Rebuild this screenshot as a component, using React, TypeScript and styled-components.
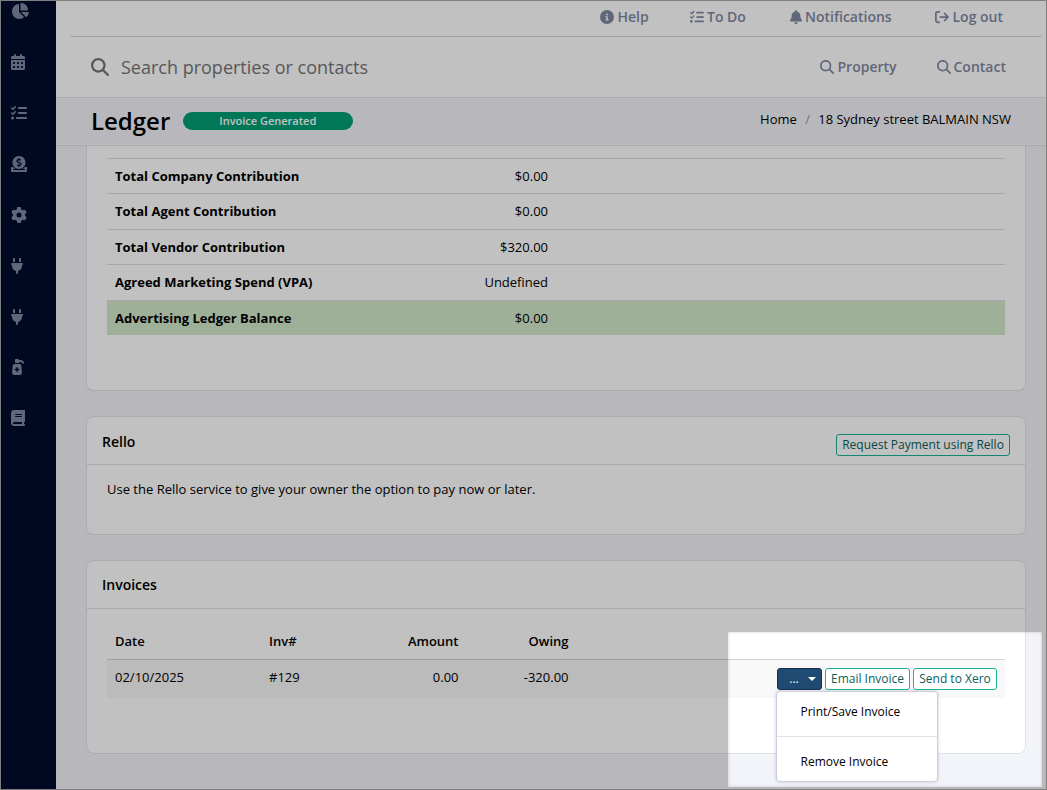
import React from "react";
import styled, { createGlobalStyle } from "styled-components";
import {
  FaArrowRightFromBracket,
  FaBell,
  FaBook,
  FaCalendarDays,
  FaChartPie,
  FaCircleInfo,
  FaGear,
  FaListCheck,
  FaMagnifyingGlass,
  FaPlug,
  FaPumpMedical,
} from "react-icons/fa6";
import { FaDonate } from "react-icons/fa";

const GlobalStyle = createGlobalStyle`
  *, *::before, *::after { box-sizing: border-box; }
  body { margin: 0; overflow: hidden; }
`;

const Screen = styled.div`
  position: relative;
  display: flex;
  width: 1047px;
  height: 790px;
  overflow: hidden;
  background: #f3f4f9;
  color: #000;
  font: 400 13px/20px "Open Sans", sans-serif;
`;

const Sidebar = styled.nav`
  flex: 0 0 56px;
  display: flex;
  flex-direction: column;
  padding: 2px 0 0 11px;
  background: #000d2c;
  color: #7f89a1;
`;

const SideItem = styled.div<{ $pull?: number; $height?: number }>`
  height: ${(p) => p.$height ?? 51}px;
  flex: none;
  margin-left: -${(p) => p.$pull ?? 0}px;
  svg { display: block; }
`;

const Main = styled.main`
  flex: 1;
  min-width: 0;
  display: flex;
  flex-direction: column;
`;

const TopBar = styled.header`
  height: 98px;
  flex: none;
  background: #fff;
  border-bottom: 1px solid #dfe1e5;
`;

const TopLinks = styled.div`
  display: grid;
  grid-template-columns: 90px 99px 146px 1fr;
  height: 37px;
  margin: 0 6px 0 15px;
  padding: 0 0 3px 529px;
  align-items: center;
  border-bottom: 1px solid #cfcfcf;
`;

const NavLink = styled.a<{ $gap?: number }>`
  display: flex;
  align-items: center;
  gap: ${(p) => p.$gap ?? 3}px;
  color: #7f89a1;
  font-size: 14px;
  font-weight: 600;
  white-space: nowrap;
`;

const SearchRow = styled.div`
  display: grid;
  grid-template-columns: 30px 699px 117px 1fr;
  align-items: center;
  height: 60px;
  padding-left: 35px;
  color: #757575;
`;

const Placeholder = styled.span`
  font-size: 18px;
`;

const TitleBar = styled.div`
  display: flex;
  align-items: center;
  flex: none;
  height: 48px;
  padding: 0 36px 2px 35px;
  border-bottom: 1px solid #dfe1e5;
  box-shadow: inset 0 -1px #fbfbfd;
`;

const Title = styled.h1`
  margin: 0;
  font-size: 24px;
  line-height: 32px;
  font-weight: 600;
`;

const Pill = styled.span`
  width: 170px;
  height: 18px;
  margin-left: 13px;
  padding-right: 1px;
  border-radius: 9px;
  background: #009f75;
  color: #fff;
  font-size: 11px;
  line-height: 18px;
  font-weight: 600;
  text-align: center;
`;

const Crumbs = styled.div`
  display: flex;
  gap: 8.3px;
  margin: -4px 0 0 auto;
  i { color: #98999d; font-style: normal; }
`;

const Card = styled.section<{ $height: number; $open?: boolean }>`
  flex: none;
  height: ${(p) => p.$height}px;
  margin: 0 21px 25px 30px;
  background: #fff;
  border: 1px solid #dfe3e8;
  border-radius: 8px;
  ${(p) => p.$open && "border-top: 0; border-radius: 0 0 8px 8px;"}
`;

const CardHead = styled.div`
  display: flex;
  align-items: center;
  justify-content: space-between;
  height: 48px;
  padding: 0 15px;
  border-bottom: 1px solid #dfe1e5;
  font-size: 14px;
  font-weight: 600;
  button { margin-top: 9px; }
`;

const ActionCardHead = styled(CardHead)`
  padding-top: 2px;
  button { margin-top: 7px; }
`;

const CardText = styled.p`
  margin: 14px 20px;
`;

const Summary = styled.div`
  margin: 11.9px 20px 0;
`;

const SummaryRow = styled.div<{ $highlight?: boolean }>`
  display: grid;
  grid-template-columns: 240px 193px;
  align-items: center;
  height: 35.5px;
  padding: 0 0 1px 8px;
  border-top: 1px solid #dcdfe3;
  background: ${(p) => (p.$highlight ? "#d3e9cb" : "transparent")};
  strong { font-weight: 700; }
  span { text-align: right; }
`;

const InvoiceTable = styled.div`
  margin: 15px 20px 0;
`;

const InvoiceRow = styled.div<{ $head?: boolean }>`
  display: grid;
  grid-template-columns: 154px 90px 99.5px 110px 1fr;
  align-items: center;
  height: ${(p) => (p.$head ? 36 : 38)}px;
  padding: 0 8px;
  background: ${(p) => (p.$head ? "transparent" : "#f8f8f8")};
  border-bottom: ${(p) => (p.$head ? "1px solid #d4d4d4" : "0")};
  font-weight: ${(p) => (p.$head ? 600 : 400)};
  > span { margin-top: ${(p) => (p.$head ? -1 : -4)}px; }
`;

const Num = styled.span`
  text-align: right;
`;

const Actions = styled.div`
  position: relative;
  display: flex;
  justify-content: flex-end;
  gap: 3px;
`;

const Button = styled.button<{ $width: number; $solid?: boolean }>`
  display: flex;
  align-items: center;
  justify-content: center;
  gap: 9px;
  width: ${(p) => p.$width}px;
  height: 22px;
  padding: 0 0 0 ${(p) => (p.$solid ? 6 : 0)}px;
  border: 1px solid ${(p) => (p.$solid ? "#14304c" : "#1ab394")};
  border-radius: 3px;
  background: ${(p) => (p.$solid ? "#1f4b73" : "#fff")};
  color: ${(p) => (p.$solid ? "#fff" : "#0a5f5a")};
  font: 400 12px/18px "Open Sans", sans-serif;
  white-space: nowrap;
`;

const Caret = styled.span`
  border: 4px solid transparent;
  border-top-color: #fff;
  border-bottom: 0;
`;

const Menu = styled.div`
  position: absolute;
  top: 23px;
  right: 59px;
  width: 162px;
  height: 91px;
  border: 1px solid #cdd0dc;
  border-radius: 4px;
  background: #fff;
  box-shadow: 0 0 3px rgba(60, 70, 120, 0.3);
  font-size: 12px;
`;

const MenuItem = styled.div`
  height: 44px;
  padding: 10px 23.5px;
  & + & { padding-top: 15px; border-top: 1px solid #e2e2e4; }
`;

const Spotlight = styled.div`
  position: absolute;
  left: 728px;
  top: 632px;
  width: 314px;
  height: 155px;
  pointer-events: none;
  box-shadow: 0 0 4px 1200px rgba(0, 0, 0, 0.245), inset 0 0 3px rgba(0, 0, 0, 0.22);
`;

const Frame = styled.div`
  position: absolute;
  inset: 0;
  pointer-events: none;
  border: 1px solid #7f7f7f;
`;

const summary = [
  ["Total Company Contribution", "$0.00"],
  ["Total Agent Contribution", "$0.00"],
  ["Total Vendor Contribution", "$320.00"],
  ["Agreed Marketing Spend (VPA)", "Undefined"],
  ["Advertising Ledger Balance", "$0.00"],
];

export default function App() {
  return (
    <>
      <GlobalStyle />
      <Screen>
        <Sidebar>
          <SideItem $height={52}><FaChartPie size={18} /></SideItem>
          <SideItem $pull={1}><FaCalendarDays size={16} /></SideItem>
          <SideItem><FaListCheck size={16} /></SideItem>
          <SideItem><FaDonate size={16} /></SideItem>
          <SideItem><FaGear size={16} /></SideItem>
          <SideItem $pull={2}><FaPlug size={16} /></SideItem>
          <SideItem $pull={2} $height={50}><FaPlug size={16} /></SideItem>
          <SideItem $pull={1}><FaPumpMedical size={16} /></SideItem>
          <SideItem $pull={1}><FaBook size={16} /></SideItem>
        </Sidebar>
        <Main>
          <TopBar>
            <TopLinks>
              <NavLink $gap={3.5}><FaCircleInfo size={14} />Help</NavLink>
              <NavLink><FaListCheck size={14} />To Do</NavLink>
              <NavLink $gap={2}><FaBell size={14} />Notifications</NavLink>
              <NavLink $gap={3.5}><FaArrowRightFromBracket size={14} />Log out</NavLink>
            </TopLinks>
            <SearchRow>
              <FaMagnifyingGlass size={18} />
              <Placeholder>Search properties or contacts</Placeholder>
              <NavLink $gap={3.5}><FaMagnifyingGlass size={14} />Property</NavLink>
              <NavLink $gap={2.5}><FaMagnifyingGlass size={14} />Contact</NavLink>
            </SearchRow>
          </TopBar>
          <TitleBar>
            <Title>Ledger</Title>
            <Pill>Invoice Generated</Pill>
            <Crumbs><span>Home</span><i>/</i><span>18 Sydney street BALMAIN NSW</span></Crumbs>
          </TitleBar>
          <Card $height={245} $open>
            <Summary>
              {summary.map(([label, value], i) => (
                <SummaryRow key={label} $highlight={i === summary.length - 1}>
                  <strong>{label}</strong>
                  <span>{value}</span>
                </SummaryRow>
              ))}
            </Summary>
          </Card>
          <Card $height={119}>
            <ActionCardHead>
              Rello
              <Button $width={174}>Request Payment using Rello</Button>
            </ActionCardHead>
            <CardText>Use the Rello service to give your owner the option to pay now or later.</CardText>
          </Card>
          <Card $height={194}>
            <CardHead>Invoices</CardHead>
            <InvoiceTable>
              <InvoiceRow $head>
                <span>Date</span><span>Inv#</span><Num>Amount</Num><Num>Owing</Num>
              </InvoiceRow>
              <InvoiceRow>
                <span>02/10/2025</span><span>#129</span><Num>0.00</Num><Num>-320.00</Num>
                <Actions>
                  <Button $width={45} $solid>...<Caret /></Button>
                  <Button $width={85}>Email Invoice</Button>
                  <Button $width={84}>Send to Xero</Button>
                  <Menu>
                    <MenuItem>Print/Save Invoice</MenuItem>
                    <MenuItem>Remove Invoice</MenuItem>
                  </Menu>
                </Actions>
              </InvoiceRow>
            </InvoiceTable>
          </Card>
        </Main>
        <Spotlight />
        <Frame />
      </Screen>
    </>
  );
}
